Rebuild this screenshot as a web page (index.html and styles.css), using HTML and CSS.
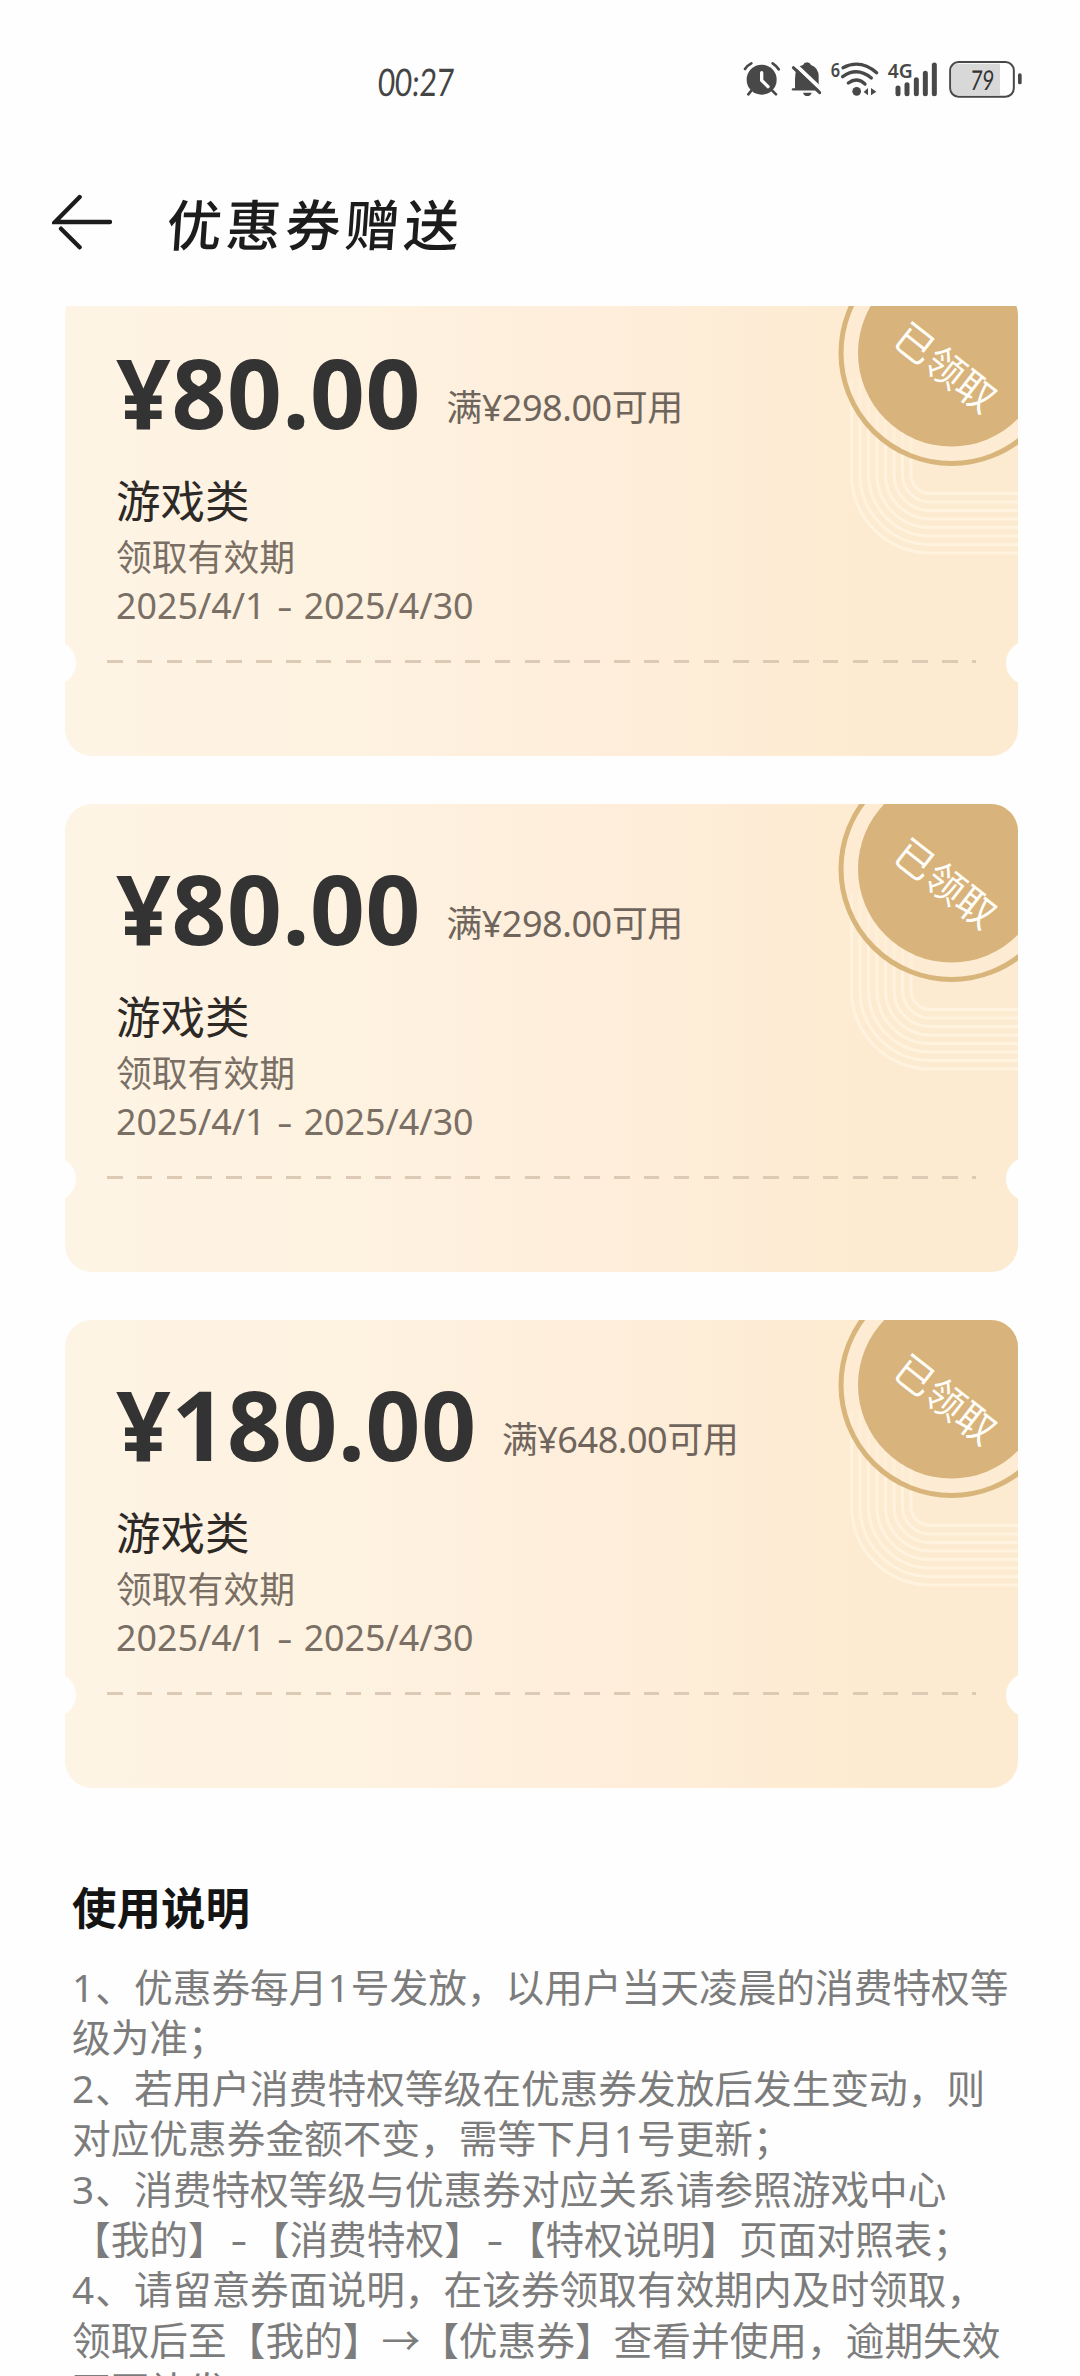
FILE: index.html
```html
<!DOCTYPE html>
<html lang="zh-CN">
<head>
<meta charset="utf-8">
<title>优惠券赠送</title>
<link rel="stylesheet" href="styles.css">
</head>
<body>
<svg class="defs" width="0" height="0" aria-hidden="true">
  <symbol id="ribbon" viewBox="0 0 953 468">
    <g fill="none" stroke="#fff6e3" stroke-width="3" stroke-opacity=".75">
      <path d="M786.500 90V186.500A78.500 78.500 0 0 0 865 265H960"/>
      <path d="M795 90V186.500A70 70 0 0 0 865 256.500H960"/>
      <path d="M803.500 90V186.500A61.500 61.500 0 0 0 865 248H960"/>
      <path d="M812 90V186.500A53 53 0 0 0 865 239.500H960"/>
      <path d="M820.500 90V186.500A44.500 44.500 0 0 0 865 231H960"/>
      <path d="M829 90V186.500A36 36 0 0 0 865 222.500H960"/>
      <path d="M837.500 90V186.500A27.500 27.500 0 0 0 865 214H960"/>
      <path d="M846 90V186.500A19 19 0 0 0 865 205.500H960"/>
    </g>
    <circle cx="886.500" cy="65" r="102" fill="none" stroke="#fdecd3" stroke-opacity=".6" stroke-width="18"/>
    <circle cx="886.500" cy="65" r="110.500" fill="none" stroke="#d8b57b" stroke-width="5"/>
    <circle cx="886.500" cy="65" r="93.500" fill="#d8b37b"/>
  </symbol>
</svg>

<div class="status">
  <time class="clock">00:27</time>
  <div class="indicators">
    <svg width="45" height="40" viewBox="60 60 135 120">
      <g stroke="#484848" stroke-width="8" stroke-linecap="round" fill="none">
        <path d="M72 87Q79 76 91 70M155 70Q166 77 173 88M91 152L82 163M154 152L165 163"/>
      </g>
      <circle cx="122" cy="119" r="45" fill="#484848"/>
      <path d="M122 98V121L141 140" stroke="#fff" stroke-width="10" fill="none" stroke-linecap="round"/>
    </svg>
    <svg width="41" height="40" viewBox="195 60 123 120">
      <path d="M222 148V116Q222 78 246 75Q249 67 258 67Q267 67 270 75Q293 83 293 110V130L298 148Z" fill="#484848"/>
      <path d="M246 158H272Q269 168 259 168Q249 168 246 158Z" fill="#484848"/>
      <path d="M216 148H300" stroke="#484848" stroke-width="7" stroke-linecap="round"/>
      <path d="M222 73L308 155" stroke="#fefefe" stroke-width="12"/>
      <path d="M217 83L296 158" stroke="#484848" stroke-width="9" stroke-linecap="round"/>
    </svg>
    <svg width="56" height="40" viewBox="318 60 168 120">
      <text class="tiny" x="329" y="110" font-size="61" textLength="28" lengthAdjust="spacingAndGlyphs">6</text>
      <g fill="none" stroke="#484848" stroke-width="10" stroke-linecap="round">
        <path d="M366 83Q418 56 467 98M365 110Q408 79 451 114M382 129Q408 110 432 132"/>
      </g>
      <circle cx="407" cy="154" r="13" fill="#484848"/>
      <path d="M428 156L441 144V166ZM450 144L466 155L450 166Z" fill="#484848"/>
    </svg>
    <svg width="62" height="40" viewBox="486 60 186 120">
      <text class="tiny" x="500" y="113" font-size="57" textLength="75" lengthAdjust="spacingAndGlyphs">4G</text>
      <g stroke="#484848" stroke-width="15" stroke-linecap="round">
        <path d="M531 144V161M558 134V161M586 119V161M613 100V161M640 75V161"/>
      </g>
    </svg>
    <svg width="81" height="40" viewBox="672 60 243 120">
      <path d="M708 71H837V165H708Q692 165 692 147V89Q692 71 708 71Z" fill="#d8d8d8"/>
      <rect x="687.500" y="66" width="191" height="104" rx="25" fill="none" stroke="#484848" stroke-width="6"/>
      <rect x="891" y="100" width="11" height="33" rx="5" fill="#484848"/>
      <text class="level" transform="translate(747 150) skewX(-4)" font-size="82" textLength="70" lengthAdjust="spacingAndGlyphs">79</text>
    </svg>
  </div>
</div>

<header class="bar">
  <svg class="back" width="60" height="56" viewBox="0 0 180 168" fill="none" stroke="#1c1c1c" stroke-width="13" stroke-linecap="round">
    <path d="M83 9L9 84H174M27 104L83 160"/>
  </svg>
  <h1>优惠券赠送</h1>
</header>

<main>
  <div class="coupons">
    <section class="coupon">
      <svg class="ribbon"><use href="#ribbon"/></svg>
      <span class="stamp">已领取</span>
      <div class="price"><b>¥80.00</b><span>满¥298.00可用</span></div>
      <div class="kind">游戏类</div>
      <div class="meta">领取有效期</div>
      <div class="meta">2025/4/1 <i class="dash">-</i> 2025/4/30</div>
      <div class="tear"></div>
    </section>
    <section class="coupon">
      <svg class="ribbon"><use href="#ribbon"/></svg>
      <span class="stamp">已领取</span>
      <div class="price"><b>¥80.00</b><span>满¥298.00可用</span></div>
      <div class="kind">游戏类</div>
      <div class="meta">领取有效期</div>
      <div class="meta">2025/4/1 <i class="dash">-</i> 2025/4/30</div>
      <div class="tear"></div>
    </section>
    <section class="coupon">
      <svg class="ribbon"><use href="#ribbon"/></svg>
      <span class="stamp">已领取</span>
      <div class="price"><b>¥180.00</b><span>满¥648.00可用</span></div>
      <div class="kind">游戏类</div>
      <div class="meta">领取有效期</div>
      <div class="meta">2025/4/1 <i class="dash">-</i> 2025/4/30</div>
      <div class="tear"></div>
    </section>
  </div>

  <section class="notes">
    <h2>使用说明</h2>
    <p><span class="num">1</span>、优惠券每月<span class="num">1</span>号发放，以用户当天凌晨的消费特权等<br>级为准；</p>
    <p><span class="num">2</span>、若用户消费特权等级在优惠券发放后发生变动，则<br>对应优惠券金额不变，需等下月<span class="num">1</span>号更新；</p>
    <p><span class="num">3</span>、消费特权等级与优惠券对应关系请参照游戏中心<br>【我的】<i class="dash wide">-</i>【消费特权】<i class="dash wide">-</i>【特权说明】页面对照表；</p>
    <p><span class="num">4</span>、请留意券面说明，在该券领取有效期内及时领取，<br>领取后至【我的】→【优惠券】查看并使用，逾期失效<br>不再补发。</p>
  </section>
</main>
</body>
</html>
```
FILE: styles.css
```css
* { box-sizing: border-box; }

body {
  margin: 0;
  width: 1080px;
  height: 2376px;
  overflow: hidden;
  background: #fefefe;
  font-family: "Noto Sans", "Noto Sans CJK SC", sans-serif;
  color: #333;
}

svg { display: block; }
.defs { position: absolute; }

.status {
  display: flex;
  justify-content: space-between;
  height: 160px;
  padding: 60px 54px 0 378px;
}
.clock {
  width: 76px;
  height: 42px;
  font-family: Lato, sans-serif;
  font-size: 38px;
  line-height: 42px;
  color: #444;
  transform: scaleX(.78) skewX(-4deg);
  transform-origin: left center;
}
.indicators { display: flex; }
.indicators svg { overflow: visible; }
.tiny {
  font-family: "Noto Sans", sans-serif;
  font-weight: 600;
  fill: #484848;
}
.level {
  font-family: Lato, sans-serif;
  fill: #333;
}

.bar {
  display: flex;
  align-items: center;
  height: 146px;
  padding: 0 0 17px 52px;
}
.back { margin-top: -6px; }
.bar h1 {
  margin: 0 0 0 55px;
  font-size: 55px;
  line-height: 80px;
  font-weight: 500;
  letter-spacing: 4.300px;
  color: #1c1c1c;
  transform: skewX(-4deg);
}

.coupons {
  display: flex;
  flex-direction: column;
  gap: 48px;
  height: 1482px;
  padding: 0 62px 0 65px;
  overflow: hidden;
  justify-content: flex-end;
}
.coupon {
  position: relative;
  flex: none;
  height: 468px;
  padding: 54px 42px 0 51px;
  border-radius: 27px;
  overflow: hidden;
  background: linear-gradient(90deg, #fef4e5, #fef2e0 30%, #feeedb 55%, #fdebd1 85%);
}
.coupon::before,
.coupon::after {
  content: "";
  position: absolute;
  top: 353px;
  width: 44px;
  height: 44px;
  border-radius: 50%;
  background: #fefefe;
}
.coupon::before { left: -33px; }
.coupon::after { right: -32px; }

.ribbon {
  position: absolute;
  inset: 0;
  width: 953px;
  height: 468px;
}
.stamp {
  position: absolute;
  left: 801px;
  top: 54px;
  width: 160px;
  line-height: 50px;
  text-align: center;
  font-size: 39px;
  color: #fffdf8;
  transform: rotate(38deg);
}

.price {
  display: flex;
  align-items: flex-end;
  gap: 25px;
  height: 100px;
}
.price b {
  font-size: 96px;
  line-height: 100px;
  font-weight: 700;
  letter-spacing: .600px;
}
.price span {
  margin-bottom: 9px;
  font-size: 36px;
  line-height: 50px;
  letter-spacing: -.450px;
  color: #6f655c;
}
.kind {
  margin-top: 29px;
  font-size: 44.500px;
  line-height: 60px;
  color: #2d2926;
}
.meta {
  font-size: 35.800px;
  line-height: 48px;
  color: #7a6f64;
}
.kind + .meta { margin-top: 2px; }

.dash {
  display: inline-block;
  font-style: normal;
  transform: scaleX(1.35);
}
.meta .dash { margin: 0 4px; }
.wide {
  width: 24px;
  text-align: center;
}

.tear {
  width: 869px;
  height: 3px;
  margin: 31px 0 0 -9px;
  background: repeating-linear-gradient(90deg, #dccab4 0 15.500px, transparent 15.500px 29.830px);
}

.notes { padding: 90px 0 0 72px; }
.notes h2 {
  margin: 0 0 24px;
  font-size: 44.500px;
  line-height: 60px;
  font-weight: 700;
  color: #141414;
}
.notes p {
  margin: 0;
  font-size: 38.700px;
  line-height: 50.400px;
  color: #7c7c7c;
  white-space: nowrap;
}
.num { letter-spacing: 1.200px; }
```
